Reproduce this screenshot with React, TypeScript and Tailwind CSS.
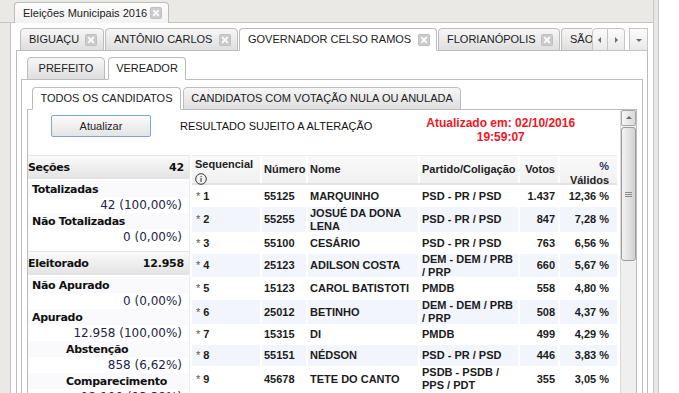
import React from "react";

const CloseIcon = () => (
  <svg width="12" height="12" viewBox="0 0 12 12" className="shrink-0">
    <rect x="0.5" y="0.5" width="11" height="11" rx="1" fill="#cbcbcb" stroke="#c0c0c0" />
    <path d="M3.2 3.2 L8.8 8.8 M8.8 3.2 L3.2 8.8" stroke="#ffffff" strokeWidth="1.7" />
  </svg>
);

const Tri = ({ dir }: { dir: "left" | "right" | "down" | "up" }) => {
  const d =
    dir === "left"
      ? "M5 1 L2 4 L5 7 Z"
      : dir === "right"
      ? "M3 1 L6 4 L3 7 Z"
      : dir === "down"
      ? "M1 3 L7 3 L4 6 Z"
      : "M1 5 L7 5 L4 2 Z";
  return (
    <svg width="8" height="8" viewBox="0 0 8 8">
      <path d={d} fill="#6a6a6a" />
    </svg>
  );
};

const InfoIcon = () => (
  <svg width="12" height="12" viewBox="0 0 12 12">
    <circle cx="6" cy="6" r="5.3" fill="none" stroke="#3a3a3a" strokeWidth="1" />
    <rect x="5.5" y="5" width="1.1" height="4" fill="#3a3a3a" />
    <rect x="5.5" y="3" width="1.1" height="1.1" fill="#3a3a3a" />
  </svg>
);

type Row = {
  s: string;
  n: string;
  nome: string[];
  p: string[];
  v: string;
  pct: string;
  h: string;
};

const rows: Row[] = [
  { s: "1", n: "55125", nome: ["MARQUINHO"], p: ["PSD - PR / PSD"], v: "1.437", pct: "12,36 %", h: "h-[22px]" },
  { s: "2", n: "55255", nome: ["JOSUÉ DA DONA", "LENA"], p: ["PSD - PR / PSD"], v: "847", pct: "7,28 %", h: "h-[25px]" },
  { s: "3", n: "55100", nome: ["CESÁRIO"], p: ["PSD - PR / PSD"], v: "763", pct: "6,56 %", h: "h-[22px]" },
  { s: "4", n: "25123", nome: ["ADILSON COSTA"], p: ["DEM - DEM / PRB", "/ PRP"], v: "660", pct: "5,67 %", h: "h-[23px]" },
  { s: "5", n: "15123", nome: ["CAROL BATISTOTI"], p: ["PMDB"], v: "558", pct: "4,80 %", h: "h-[23px]" },
  { s: "6", n: "25012", nome: ["BETINHO"], p: ["DEM - DEM / PRB", "/ PRP"], v: "508", pct: "4,37 %", h: "h-[24px]" },
  { s: "7", n: "15315", nome: ["DI"], p: ["PMDB"], v: "499", pct: "4,29 %", h: "h-[21px]" },
  { s: "8", n: "55151", nome: ["NÉDSON"], p: ["PSD - PR / PSD"], v: "446", pct: "3,83 %", h: "h-[21px]" },
  { s: "9", n: "45678", nome: ["TETE DO CANTO"], p: ["PSDB - PSDB /", "PPS / PDT"], v: "355", pct: "3,05 %", h: "h-[26px]" },
];

function CloseTab({ label, active, w }: { label: string; active?: boolean; w: string }) {
  return (
    <div
      className={`relative -mb-px h-[23px] shrink-0 flex items-center justify-between pl-[8px] pr-[6px] rounded-t-[4px] border border-[#bcbcbc] ${
        active ? "bg-white border-b-white z-10" : "bg-linear-to-b from-[#f7f7f7] to-[#dedede]"
      } ${w}`}
    >
      <span className="text-[11px] text-[#222] whitespace-nowrap">{label}</span>
      <CloseIcon />
    </div>
  );
}

function PlainTab({ label, active, w }: { label: string; active?: boolean; w: string }) {
  return (
    <div
      className={`relative -mb-px h-[23px] shrink-0 flex items-center justify-center rounded-t-[4px] border border-[#bcbcbc] ${
        active ? "bg-white border-b-white z-10" : "bg-linear-to-b from-[#f7f7f7] to-[#dedede]"
      } ${w}`}
    >
      <span className="text-[11px] text-[#222] whitespace-nowrap">{label}</span>
    </div>
  );
}

function SumHeader({ label, value }: { label: string; value: string }) {
  return (
    <div className="h-[24px] flex items-center justify-between pr-[5px] bg-linear-to-b from-[#fafafa] to-[#e3e3e3] border-t border-[#e4e4e4]">
      <span className="font-bold text-[11px] tracking-[-0.3px] text-[#111]">{label}</span>
      <span className="font-bold text-[11px] tracking-[-0.2px] text-[#111]">{value}</span>
    </div>
  );
}

function SumLabel({ label, indent }: { label: string; indent?: boolean }) {
  return (
    <div className={`h-[16px] flex items-center bg-[#fafafc] ${indent ? "pl-[38px]" : "pl-[4px]"}`}>
      <span className="font-bold text-[11px] tracking-[-0.3px] text-[#111]">{label}</span>
    </div>
  );
}

function SumValue({ value }: { value: string }) {
  return (
    <div className="h-[16px] flex items-center justify-end pr-[7px] bg-white">
      <span className="text-[12px] text-[#24244a]">{value}</span>
    </div>
  );
}

export default function App() {
  return (
    <div className="w-[679px] h-[393px] overflow-hidden bg-white flex font-['Liberation_Sans',Arial,sans-serif] text-[11px] text-[#222] leading-none">
      <div className="w-[653px] h-full shrink-0 flex flex-col bg-[#ebe9e6]">
        {/* outer tab strip */}
        <div className="h-[23px] shrink-0 flex items-end pl-[14px] border-b border-[#c4c4c4]">
          <div className="relative -mb-px h-[21px] w-[155px] flex items-center justify-between pl-[8px] pr-[6px] rounded-t-[4px] border border-b-0 border-[#bcbcbc] bg-linear-to-b from-[#fdfdfd] to-[#f2f2f2]">
            <span className="text-[11px] text-[#222] whitespace-nowrap">Eleições Municipais 2016</span>
            <CloseIcon />
          </div>
        </div>

        {/* outer body */}
        <div className="flex-1 min-h-0 ml-[10px] bg-white border-l border-[#c4c4c4] px-[5px] pt-[5px] flex flex-col">
          {/* panel 2 strip */}
          <div className="h-[23px] shrink-0 flex items-end border-b border-[#bcbcbc] pl-[4px]">
            <div className="flex items-end gap-[1px]">
              <CloseTab label="BIGUAÇU" w="w-[84px]" />
              <CloseTab label="ANTÔNIO CARLOS" w="w-[133px]" />
              <CloseTab label="GOVERNADOR CELSO RAMOS" active w="w-[198px]" />
              <CloseTab label="FLORIANÓPOLIS" w="w-[122px]" />
              <div className="relative -mb-px h-[23px] w-[31px] shrink-0 overflow-hidden flex items-center pl-[8px] rounded-tl-[4px] border border-r-0 border-[#bcbcbc] bg-linear-to-b from-[#f7f7f7] to-[#dedede]">
                <span className="text-[11px] text-[#222] whitespace-nowrap">SÃO</span>
              </div>
            </div>
            <div className="flex items-end w-[56px] shrink-0">
              <div className="relative -mb-px h-[23px] w-[16px] flex items-center justify-center border border-[#c4c4c4] rounded-tl-[4px] bg-linear-to-b from-[#fbfbfb] to-[#e9e9e9]">
                <Tri dir="left" />
              </div>
              <div className="relative -mb-px h-[23px] w-[17px] flex items-center justify-center border border-l-0 border-[#c4c4c4] rounded-tr-[4px] bg-linear-to-b from-[#fbfbfb] to-[#e9e9e9]">
                <Tri dir="right" />
              </div>
              <div className="w-[4px]" />
              <div className="relative -mb-px h-[23px] w-[19px] flex items-center justify-center border border-[#c4c4c4] bg-linear-to-b from-[#fbfbfb] to-[#e9e9e9]">
                <Tri dir="down" />
              </div>
            </div>
          </div>

          {/* panel 2 body */}
          <div className="flex-1 min-h-0 border-x border-[#bcbcbc] px-[4px] pt-[6px] flex flex-col">
            {/* panel 3 strip */}
            <div className="h-[23px] shrink-0 flex items-end gap-[3px] border-b border-[#bcbcbc] pl-[6px]">
              <PlainTab label="PREFEITO" w="w-[78px]" />
              <PlainTab label="VEREADOR" active w="w-[78px]" />
            </div>
            {/* panel 3 body */}
            <div className="flex-1 min-h-0 border-x border-[#bcbcbc] px-[5px] pt-[7px] flex flex-col">
              {/* panel 4 strip */}
              <div className="h-[23px] shrink-0 flex items-end gap-[2px] border-b border-[#bcbcbc] pl-[5px]">
                <PlainTab label="TODOS OS CANDIDATOS" active w="w-[149px]" />
                <PlainTab label="CANDIDATOS COM VOTAÇÃO NULA OU ANULADA" w="w-[278px]" />
              </div>
              {/* panel 4 body */}
              <div className="flex-1 min-h-0 border-x border-[#bcbcbc] flex">
                <div className="flex-1 min-w-0 flex flex-col">
                  {/* top controls */}
                  <div className="h-[45px] shrink-0 flex items-start">
                    <button className="ml-[23px] mt-[5px] w-[100px] h-[22px] rounded-[2px] border border-[#7ea6d8] bg-linear-to-b from-[#fbfbfb] to-[#e4e4e4] text-[11px] text-[#222]">
                      Atualizar
                    </button>
                    <div className="ml-[29px] mt-[11px] text-[11px] text-[#111] whitespace-nowrap">
                      RESULTADO SUJEITO A ALTERAÇÃO
                    </div>
                    <div className="ml-[54px] mt-[6px] flex flex-col items-center text-[12px] font-bold text-[#f2161e] leading-[14px]">
                      <span>Atualizado em: 02/10/2016</span>
                      <span>19:59:07</span>
                    </div>
                  </div>
                  {/* content */}
                  <div className="flex-1 min-h-0 flex items-start">
                    {/* left summary */}
                    <div className="w-[162px] shrink-0 flex flex-col font-['DejaVu_Sans',sans-serif] border-r border-[#ececec]">
                      <SumHeader label="Seções" value="42" />
                      <div className="h-[2px]" />
                      <SumLabel label="Totalizadas" />
                      <SumValue value="42 (100,00%)" />
                      <SumLabel label="Não Totalizadas" />
                      <SumValue value="0 (0,00%)" />
                      <div className="h-[6px] bg-white" />
                      <SumHeader label="Eleitorado" value="12.958" />
                      <div className="h-[2px]" />
                      <SumLabel label="Não Apurado" />
                      <SumValue value="0 (0,00%)" />
                      <SumLabel label="Apurado" />
                      <SumValue value="12.958 (100,00%)" />
                      <SumLabel label="Abstenção" indent />
                      <SumValue value="858 (6,62%)" />
                      <SumLabel label="Comparecimento" indent />
                      <SumValue value="12.100 (93,38%)" />
                    </div>
                    {/* table */}
                    <div className="ml-[2px] w-[425px] shrink-0 flex flex-col font-bold text-[11px] text-[#1c1c1c]">
                      <div className="h-[30px] flex border-t border-[#ececec] border-b-2 border-b-[#e3e3e3] bg-linear-to-b from-[#f9f9f9] to-[#f1f1f1] text-[#222]">
                        <div className="w-[70px] flex flex-col items-start pl-[3px] pt-[3px] border-r-2 border-white">
                          <span className="text-[11px]">Sequencial</span>
                          <span className="mt-[3px]"><InfoIcon /></span>
                        </div>
                        <div className="w-[46px] flex items-end pl-[2px] pb-[8px] border-r-2 border-white">Número</div>
                        <div className="w-[112px] flex items-end pl-[2px] pb-[8px] border-r-2 border-white">Nome</div>
                        <div className="w-[100px] flex items-end pl-[2px] pb-[8px] border-r-2 border-white whitespace-nowrap">Partido/Coligação</div>
                        <div className="w-[40px] flex items-end justify-end pr-[3px] pb-[8px] border-r-2 border-white">Votos</div>
                        <div className="w-[57px] flex flex-col items-end justify-start pr-[8px] pt-[3px] leading-[14px]">
                          <span className="text-[#2a3466]">%</span>
                          <span>Válidos</span>
                        </div>
                      </div>
                      {rows.map((r, i) => (
                        <div key={r.s} className={`${r.h} flex items-stretch ${i % 2 === 1 ? "bg-[#f3f5fc]" : "bg-white"}`}>
                          <div className="w-[70px] flex items-center pl-[4px] border-r-2 border-white">
                            <span className="text-[#555] font-normal">*</span>
                            <span className="ml-[3px]">{r.s}</span>
                          </div>
                          <div className="w-[46px] flex items-center pl-[2px] border-r-2 border-white">{r.n}</div>
                          <div className="w-[112px] flex flex-col justify-center pl-[2px] leading-[13px] border-r-2 border-white whitespace-nowrap">
                            {r.nome.map((t) => (
                              <span key={t}>{t}</span>
                            ))}
                          </div>
                          <div className="w-[100px] flex flex-col justify-center pl-[2px] leading-[13px] border-r-2 border-white whitespace-nowrap">
                            {r.p.map((t) => (
                              <span key={t}>{t}</span>
                            ))}
                          </div>
                          <div className="w-[40px] flex items-center justify-end pr-[3px] border-r-2 border-white">{r.v}</div>
                          <div className="w-[57px] flex items-center justify-end pr-[8px]">{r.pct}</div>
                        </div>
                      ))}
                    </div>
                  </div>
                </div>
                {/* scrollbar */}
                <div className="w-[16px] shrink-0 flex flex-col bg-[#efefef] border-l border-[#dadada]">
                  <div className="h-[16px] flex items-center justify-center border border-[#a9a9a9] rounded-[2px] bg-linear-to-r from-[#f6f6f6] to-[#dadada]">
                    <Tri dir="up" />
                  </div>
                  <div className="h-[134px] mt-[1px] flex items-center justify-center border border-[#9c9c9c] rounded-[3px] bg-linear-to-r from-[#f2f2f2] to-[#d3d3d3]">
                    <svg width="7" height="7" viewBox="0 0 7 7">
                      <path d="M0 1.5 H7 M0 3.5 H7 M0 5.5 H7" stroke="#8a8a8a" strokeWidth="1" />
                    </svg>
                  </div>
                </div>
              </div>
            </div>
          </div>
        </div>
      </div>
      {/* right splitter band */}
      <div className="w-[6px] h-full shrink-0 bg-[#e6e6e6] border-x border-[#c8c8c8]" />
    </div>
  );
}
